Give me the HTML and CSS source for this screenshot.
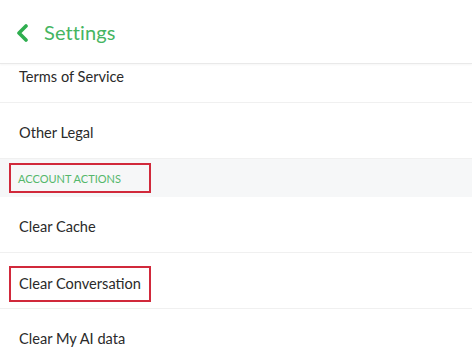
FILE: index.html
```html
<!DOCTYPE HTML>
<html>

<head>
    <meta name="viewport" content="width=device-width, initial-scale=1">
    <title>Settings</title>
    <link rel="stylesheet" href="styles.css">
</head>

<body>
    <div class="topnav">
        <svg class="back" width="14" height="18" viewBox="0 0 14 18">
            <path d="M11 2 L4 9 L11 16" fill="none" stroke="#2fae4f" stroke-width="3.6" stroke-linecap="round" stroke-linejoin="round" />
        </svg>
        <h1>Settings</h1>
    </div>

    <div class="list">
        <div class="row first">Terms of Service</div>
        <div class="row">Other Legal</div>
        <div class="section">
            <span class="mark">ACCOUNT ACTIONS</span>
        </div>
        <div class="row">Clear Cache</div>
        <div class="row">
            <span class="mark">Clear Conversation</span>
        </div>
        <div class="row last">Clear My AI data</div>
    </div>
</body>

</html>
```

FILE: styles.css
```css
html {
    font-family: Lato, "Noto Sans", sans-serif;
}

body {
    margin: 0;
    background: #fff;
    width: 472px;
    height: 364px;
    overflow: hidden;
}

.topnav {
    display: flex;
    align-items: center;
    height: 63px;
    padding-left: 15px;
    border-bottom: 1px solid #e9e9e9;
    box-shadow: 0 1px 2px rgba(0, 0, 0, 0.04);
}

.back {
    margin-top: 2px;
}

h1 {
    margin: 0 0 0 15px;
    font-size: 20px;
    font-weight: 400;
    color: #45b562;
    letter-spacing: 0.1px;
}

.row {
    display: flex;
    align-items: center;
    box-sizing: border-box;
    height: 56px;
    padding: 3px 0 0 19px;
    font-size: 14.6px;
    color: #2a2a2a;
    border-bottom: 1px solid #f0f0f0;
}

.row.first {
    height: 39px;
    align-items: flex-start;
    padding-top: 1px;
    line-height: 24px;
}

.row.last {
    border-bottom: none;
}

.section {
    display: flex;
    align-items: center;
    height: 38px;
    padding-left: 9px;
    background-color: #f6f7f8;
    font-size: 11px;
    color: #55b76b;
}

.section .mark {
    display: flex;
    align-items: center;
    width: 131px;
    height: 26px;
    padding-left: 7px;
    border: 2px solid #d1293b;
}

.row .mark {
    display: flex;
    align-items: center;
    height: 32px;
    width: 130px;
    margin-left: -10px;
    margin-top: 3px;
    padding-left: 8px;
    border: 2px solid #d1293b;
}
```
